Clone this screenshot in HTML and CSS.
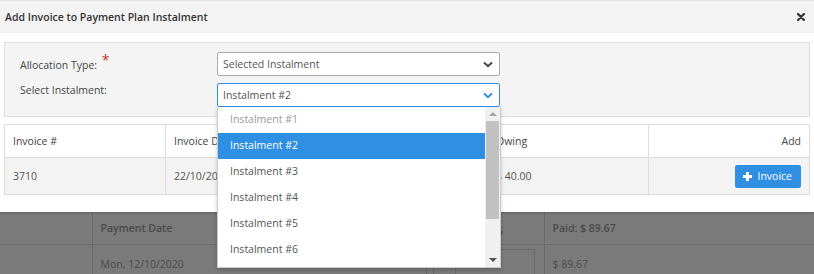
FILE: index.html
```html
<!DOCTYPE html>
<html lang="en">
<head>
    <meta charset="UTF-8">
    <title>Add Invoice to Payment Plan Instalment</title>
    <link rel="stylesheet" href="styles.css">
</head>
<body>
    <div class="modal">
        <div class="modal-head">
            <span class="modal-title">Add Invoice to Payment Plan Instalment</span>
            <a href="javascript:;" class="close">
                <svg width="8" height="8" viewBox="0 0 8 8"><path d="M1 1L7 7M7 1L1 7" stroke="#333" stroke-width="2.2" stroke-linecap="round"/></svg>
            </a>
        </div>
        <div class="modal-body">
            <div class="panel">
                <div class="form-row">
                    <label class="form-label">Allocation Type: <span class="req">*</span></label>
                    <div class="select">
                        <span>Selected Instalment</span>
                        <svg class="chev" width="10" height="7" viewBox="0 0 10 7"><path d="M1 1.5L5 5.2L9 1.5" fill="none" stroke="#444" stroke-width="2"/></svg>
                    </div>
                </div>
                <div class="form-row">
                    <label class="form-label form-label-top">Select Instalment:</label>
                    <div class="select-wrap">
                        <div class="select focus">
                            <span>Instalment #2</span>
                            <svg class="chev" width="10" height="7" viewBox="0 0 10 7"><path d="M1 1.5L5 5.2L9 1.5" fill="none" stroke="#2f8fe3" stroke-width="2"/></svg>
                        </div>
                        <div class="dropdown">
                            <ul class="options">
                                <li class="disabled">Instalment #1</li>
                                <li class="active">Instalment #2</li>
                                <li>Instalment #3</li>
                                <li>Instalment #4</li>
                                <li>Instalment #5</li>
                                <li>Instalment #6</li>
                            </ul>
                            <div class="scrollbar">
                                <span class="arrow up"></span>
                                <span class="thumb"></span>
                                <span class="arrow down"></span>
                            </div>
                        </div>
                    </div>
                </div>
            </div>
            <table class="grid">
                <thead>
                    <tr>
                        <th>Invoice #</th>
                        <th>Invoice Date</th>
                        <th>Due Date</th>
                        <th>Owing</th>
                        <th class="right">Add</th>
                    </tr>
                </thead>
                <tbody>
                    <tr>
                        <td>3710</td>
                        <td>22/10/2020</td>
                        <td>22/11/2020</td>
                        <td>$ 40.00</td>
                        <td class="right"><a href="javascript:;" class="btn"><span class="plus"></span>Invoice</a></td>
                    </tr>
                </tbody>
            </table>
        </div>
    </div>
    <div class="backdrop">
        <table class="under">
            <tr>
                <td class="c1"></td>
                <td class="c2">Payment Date</td>
                <td class="c3">Instalment #5</td>
                <td class="c4">Paid: $ 89.67</td>
            </tr>
            <tr>
                <td class="c1"></td>
                <td class="c2">Mon, 12/10/2020</td>
                <td class="c3"><div class="input-group"><span class="addon"></span><span class="field"></span></div></td>
                <td class="c4">$ 89.67</td>
            </tr>
        </table>
    </div>
</body>
</html>
```

FILE: styles.css
```css
*{padding:0;margin:0;box-sizing:border-box}
li{list-style:none}
a{text-decoration:none}
body{
    width:814px;
    height:274px;
    overflow:hidden;
    font-family:"Open Sans",sans-serif;
    font-size:10.5px;
    color:#555;
    background:#7a7a7a;
}
.modal{
    background:#fff;
    position:relative;
    z-index:2;
    box-shadow:0 1px 2px rgba(0,0,0,0.2);
}
.modal-head{
    height:33px;
    border-top:1px solid #e0e0e0;
    background:#f3f3f3;
    display:flex;
    align-items:center;
    justify-content:space-between;
    padding:0 9px 0 5px;
}
.modal-title{
    font-weight:600;
    color:#333;
}
.close{display:flex}
.modal-body{
    padding:9px 4px 17px 4px;
}
.panel{
    border:1px solid #ddd;
    background:#f4f4f4;
    padding:9px 15px;
    display:flex;
    flex-direction:column;
    gap:6px;
}
.form-row{
    display:flex;
    align-items:flex-start;
}
.form-label{
    width:197px;
    line-height:24px;
    color:#444;
}
.form-label-top{line-height:14px}
.req{
    color:#c0392b;
    font-size:14px;
    position:relative;
    top:-4px;
    margin-left:2px;
}
.select-wrap{position:relative}
.select{
    width:283px;
    height:24px;
    border:1px solid #aaa;
    border-radius:2px;
    background:#fff;
    display:flex;
    align-items:center;
    justify-content:space-between;
    padding:0 6px 0 5px;
}
.select.focus{border-color:#2f8fe3}
.dropdown{
    position:absolute;
    top:100%;
    left:0;
    width:284px;
    height:161px;
    background:#fff;
    border:1px solid #ccc;
    border-top:0;
    box-shadow:0 2px 4px rgba(0,0,0,0.2);
    display:flex;
    overflow:hidden;
    z-index:5;
}
.options{flex:1}
.options li{
    height:26px;
    line-height:25px;
    padding-left:12px;
}
.options li.disabled{color:#999}
.options li.active{
    background:#2f8fe3;
    color:#fff;
}
.scrollbar{
    width:15px;
    background:#f0f0f0;
    display:flex;
    flex-direction:column;
    align-items:center;
}
.arrow{
    width:0;
    height:0;
    border-left:4px solid transparent;
    border-right:4px solid transparent;
    margin:5px 0;
}
.arrow.up{border-bottom:4px solid #a3a3a3}
.arrow.down{border-top:4px solid #505050;margin-top:auto}
.thumb{
    width:13px;
    height:98px;
    background:#c1c1c1;
}
.grid{
    margin-top:7px;
    width:100%;
    border-collapse:collapse;
    table-layout:fixed;
}
.grid th,.grid td{
    border:1px solid #ddd;
    text-align:left;
    padding:0 8px;
}
.grid th{
    height:33px;
    font-weight:400;
    color:#444;
    background:#fff;
}
.grid td{
    height:37px;
    background:#f3f3f3;
}
.grid .right{text-align:right}
.btn{
    display:inline-flex;
    align-items:center;
    gap:5px;
    height:23px;
    padding:0 9px 0 8px;
    background:#2f8fe3;
    color:#fff;
    border-radius:2px;
    vertical-align:middle;
}
.plus{
    width:9px;
    height:9px;
    background:
        linear-gradient(#fff,#fff) center/9px 3px no-repeat,
        linear-gradient(#fff,#fff) center/3px 9px no-repeat;
}
.backdrop{
    height:63px;
}
.under{
    width:100%;
    border-collapse:collapse;
    color:#4a4a4a;
}
.under td{
    border-right:1px solid #6a6a6a;
    border-bottom:1px solid #6a6a6a;
    padding:0 8px;
    vertical-align:middle;
}
.under tr:first-child td{height:32px;font-weight:600}
.under tr:last-child td{height:38px;padding-top:2px}
.under .c1{width:92px}
.under .c2{width:334px}
.under .c3{width:118px;padding:7px 9px 0 6px}
.under .c4{border-right:0}
.input-group{
    display:flex;
    height:30px;
    border:1px solid #6a6a6a;
}
.addon{width:22px;border-right:1px solid #6a6a6a}
```
